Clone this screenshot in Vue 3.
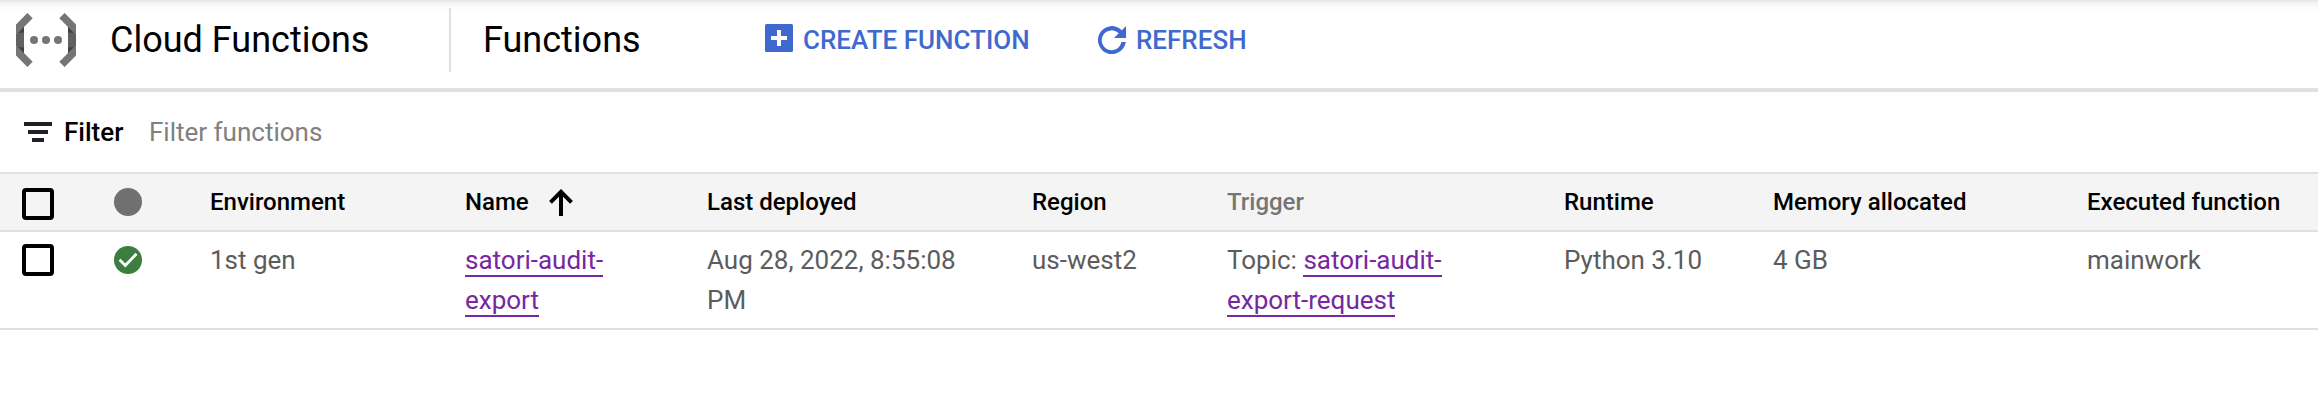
<script setup>
const columns = [
  { label: 'Environment' },
  { label: 'Name', sorted: true },
  { label: 'Last deployed' },
  { label: 'Region' },
  { label: 'Trigger', muted: true },
  { label: 'Runtime' },
  { label: 'Memory allocated' },
  { label: 'Executed function' },
]
</script>

<template>
  <div class="page">
    <header class="topbar">
      <svg class="logo" width="60" height="54" viewBox="0 0 60 54">
        <g id="bracket">
          <path fill="#757575" d="M11.4 0 16.7 5.3 8 14V40l8.7 8.7L11.4 54 0 42.6V11.4z" />
          <path fill="#616161" d="M0 22 8 14V40L0 32z" />
          <path fill="#424242" d="M2 20 8 14V19.500zM2 34 8 40V34.500z" />
        </g>
        <use href="#bracket" transform="translate(60 0) scale(-1 1)" />
        <g fill="#757575">
          <circle cx="18" cy="27" r="4" />
          <circle cx="30" cy="27" r="4" />
          <circle cx="42" cy="27" r="4" />
        </g>
      </svg>
      <div class="product">Cloud Functions</div>
      <h1 class="title">Functions</h1>
      <button class="action create">
        <svg width="28" height="28" viewBox="0 0 28 28">
          <rect width="28" height="28" rx="1.500" fill="#3f69cf" />
          <path fill="#fff" d="M12 6h4v6h6v4h-6v6h-4v-6H6v-4h6z" />
        </svg>
        <span>CREATE FUNCTION</span>
      </button>
      <button class="action refresh">
        <svg width="28" height="28" viewBox="0 0 28 28">
          <path fill="#3f69cf" d="M28 0V12H16l4.700-4.700A9.900 9.900 0 1 0 23.400 16H27.800A14 14 0 1 1 23.800 4.200z" />
        </svg>
        <span>REFRESH</span>
      </button>
    </header>

    <div class="filter">
      <svg width="28" height="20" viewBox="0 0 28 20">
        <path fill="#202124" d="M0 0h28v4H0zM4 8h20v4H4zM8 16h12v4H8z" />
      </svg>
      <span class="filter-label">Filter</span>
      <span class="filter-hint">Filter functions</span>
    </div>

    <div class="row head">
      <div class="check"><span class="box"></span></div>
      <div class="status"><span class="dot"></span></div>
      <div v-for="c in columns" :key="c.label" class="th" :class="{ muted: c.muted }">
        {{ c.label }}
        <svg v-if="c.sorted" class="arrow" width="24" height="27" viewBox="0 0 24 27">
          <path fill="none" stroke="#000" stroke-width="4" d="M12 27V3M1.500 13.300 12 2.800 22.500 13.300" />
        </svg>
      </div>
    </div>

    <div class="row body">
      <div class="check"><span class="box"></span></div>
      <div class="status">
        <svg width="28" height="28" viewBox="0 0 28 28">
          <circle cx="14" cy="14" r="14" fill="#3c7e40" />
          <path fill="none" stroke="#fff" stroke-width="2.800" d="M5.600 13.700 11.300 19.400 22.500 7.800" />
        </svg>
      </div>
      <div class="td">1st gen</div>
      <div class="td"><a>satori-audit-<br>export</a></div>
      <div class="td">Aug 28, 2022, 8:55:08<br>PM</div>
      <div class="td">us-west2</div>
      <div class="td">Topic: <a>satori-audit-<br>export-request</a></div>
      <div class="td">Python 3.10</div>
      <div class="td">4 GB</div>
      <div class="td">mainwork</div>
    </div>
  </div>
</template>

<style>
body {
  margin: 0;
  background: #fff;
}
</style>

<style scoped>
.page {
  width: 2318px;
  height: 416px;
  overflow: hidden;
  background: #fff;
  font-family: Roboto, "Liberation Sans", sans-serif;
  font-size: 26px;
  color: #000;
}
.topbar {
  display: flex;
  box-sizing: border-box;
  height: 92px;
  border-bottom: 4px solid #e0e0e0;
  background: linear-gradient(#e4e4e4, #f4f4f4 3px, #fdfdfd 9px, #fff 12px);
}
.logo {
  margin: 13px 34px 0 16px;
}
.product,
.title {
  box-sizing: border-box;
  margin: 8px 0 0;
  height: 64px;
  font-size: 36px;
  font-weight: 400;
  line-height: 64px;
  white-space: nowrap;
}
.product {
  width: 339px;
}
.title {
  width: 316px;
  padding-left: 32px;
  border-left: 2px solid #e0e0e0;
}
.action {
  display: flex;
  margin: 0;
  padding: 0;
  border: 0;
  background: none;
  color: #3f69cf;
  font: 500 26px/30px Roboto, sans-serif;
  white-space: nowrap;
}
.action span {
  margin-top: 25px;
}
.create {
  width: 333px;
  gap: 10px;
}
.create svg {
  margin-top: 24px;
}
.refresh {
  gap: 10px;
}
.refresh svg {
  margin-top: 26px;
}
.filter {
  display: flex;
  align-items: center;
  box-sizing: border-box;
  height: 80px;
  padding-left: 24px;
}
.filter-label {
  width: 85px;
  margin-left: 12px;
  font-weight: 500;
}
.filter-hint {
  color: #808080;
}
.row {
  display: grid;
  grid-template-columns: 114px 96px 255px 242px 325px 195px 337px 209px 314px 231px;
  box-sizing: border-box;
}
.head {
  height: 60px;
  border-top: 2px solid #e0e0e0;
  border-bottom: 2px solid #e0e0e0;
  background: #f4f4f4;
  font-size: 24px;
  font-weight: 500;
  line-height: 56px;
}
.body {
  height: 98px;
  padding: 8px 0;
  border-bottom: 2px solid #e0e0e0;
  line-height: 40px;
  color: #5c5c5c;
}
.box {
  display: block;
  box-sizing: border-box;
  width: 32px;
  height: 32px;
  margin: 4px 0 0 22px;
  border: 4px solid #000;
  border-radius: 4px;
}
.head .box {
  margin-top: 14px;
}
.dot {
  display: block;
  width: 28px;
  height: 28px;
  margin-top: 14px;
  border-radius: 50%;
  background: #707070;
}
.status svg {
  display: block;
  margin-top: 6px;
}
.th,
.td {
  white-space: nowrap;
}
.th {
  display: flex;
}
.muted {
  color: #757575;
}
.arrow {
  margin: 15px 0 0 20px;
}
.td a {
  color: #7627a1;
  border-bottom: 2px solid #7627a1;
}
</style>
